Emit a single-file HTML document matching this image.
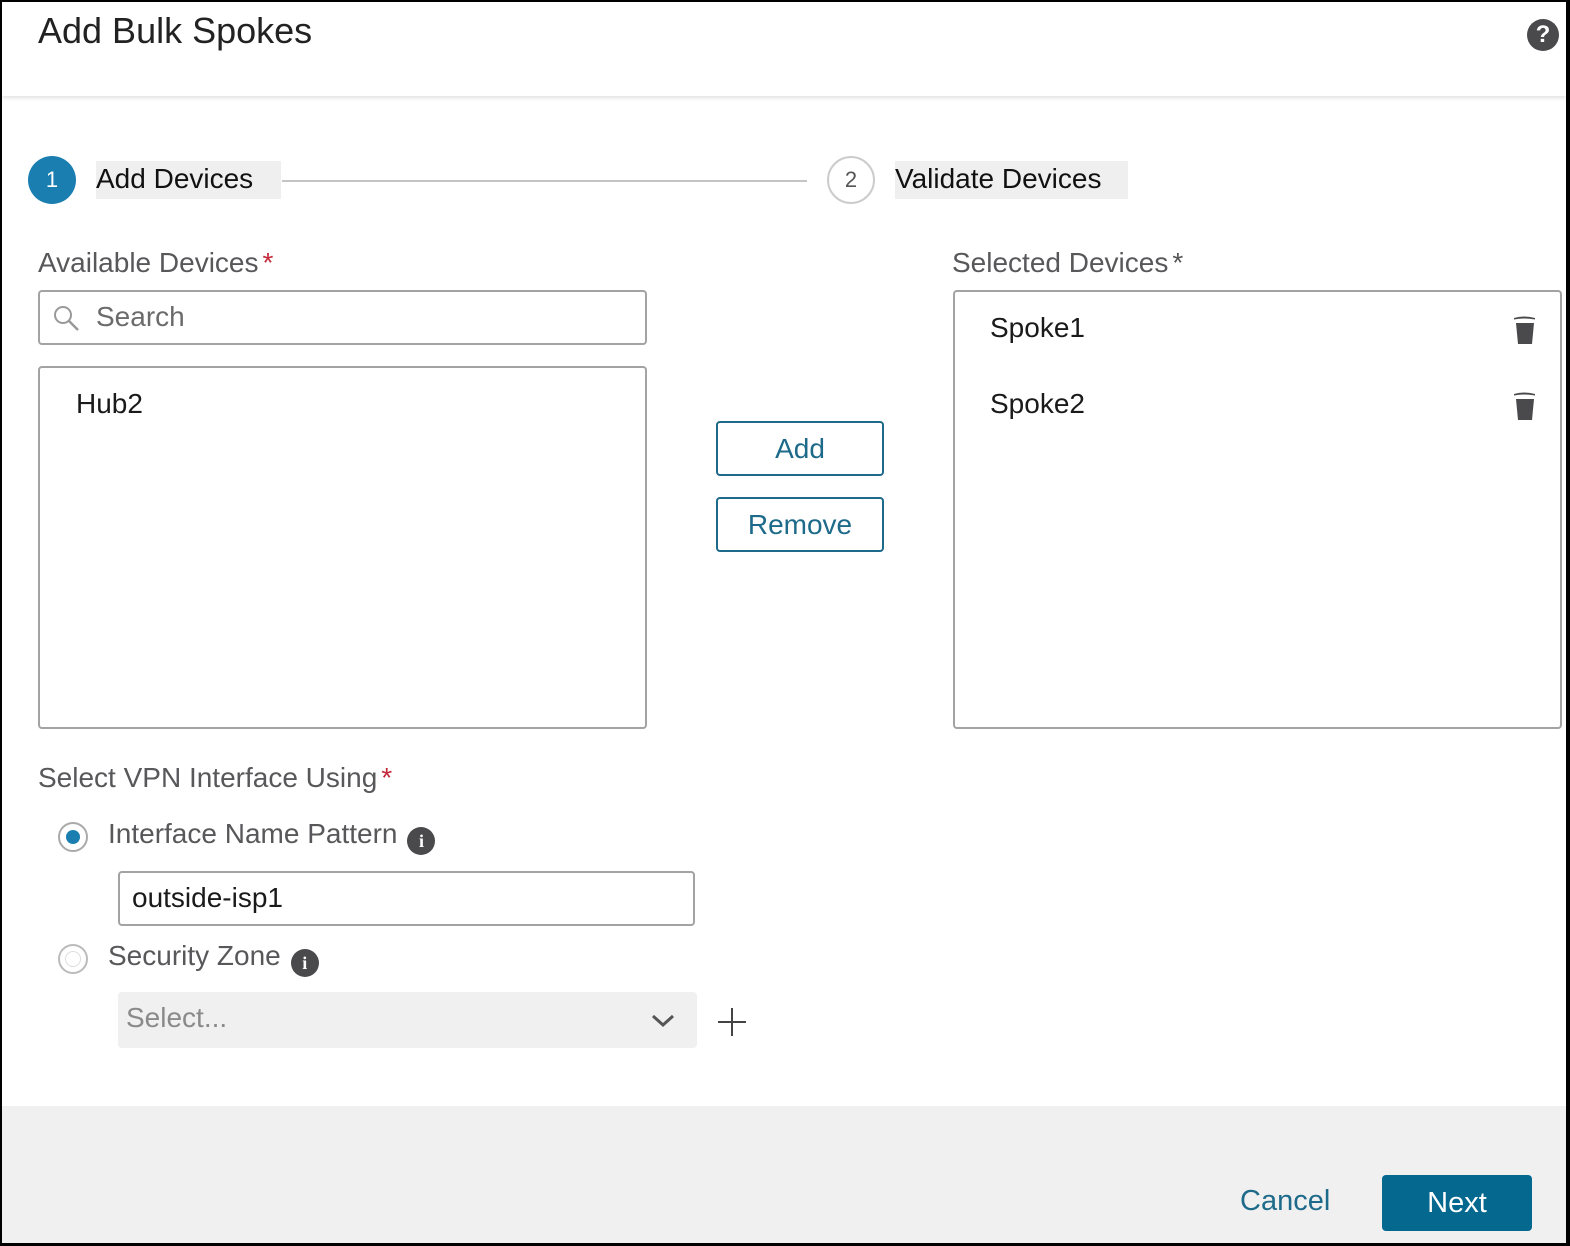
<!DOCTYPE html>
<html><head><meta charset="utf-8"><style>
*{box-sizing:border-box;margin:0;padding:0}
html,body{width:1570px;height:1246px;overflow:hidden;background:#000;font-family:"Liberation Sans",sans-serif}
#page{position:absolute;left:2px;top:2px;width:1564px;height:1241px;background:#fff;overflow:hidden}
.a{position:absolute;white-space:nowrap}
.hdr{position:absolute;left:0;top:0;width:1564px;height:94px;background:#fff;box-shadow:0 2px 4px rgba(0,0,0,0.12)}
.lbl{font-size:28px;color:#58585b}
.req{color:#c4283a;margin-left:4px}
.box{position:absolute;border:2px solid #a3a3a3;border-radius:4px;background:#fff}
.txt{font-size:28px;color:#1a1a1a}
.btn{position:absolute;border:2px solid #1d6a8a;border-radius:4px;color:#1d6a8a;font-size:28px;text-align:center;background:#fff}
.info{display:inline-block;vertical-align:-4px;margin-left:10px;width:28px;height:28px;border-radius:50%;background:#4a4a4d;color:#fff;font-size:18px;font-weight:bold;text-align:center;line-height:28px;font-family:"Liberation Serif",serif}
</style></head><body><div id="page">
<div class="hdr"></div>
<div class="a" style="left:36px;top:8px;font-size:36px;color:#222">Add Bulk Spokes</div>
<div class="a" style="left:1525px;top:17px;width:32px;height:32px;border-radius:50%;background:#4a4a4d;color:#fff;font-weight:bold;font-size:24px;text-align:center;line-height:32px">?</div>

<div class="a" style="left:26px;top:154px;width:48px;height:48px;border-radius:50%;background:#1a7fb0;color:#fff;font-size:22px;text-align:center;line-height:48px">1</div>
<div class="a" style="left:94px;top:159px;width:185px;height:38px;background:#efefef"></div>
<div class="a txt" style="left:94px;top:161px;color:#111">Add Devices</div>
<div class="a" style="left:280px;top:178px;width:525px;height:2px;background:#c4c4c4"></div>
<div class="a" style="left:825px;top:154px;width:48px;height:48px;border-radius:50%;border:2px solid #ccc;color:#555;font-size:22px;text-align:center;line-height:44px">2</div>
<div class="a" style="left:893px;top:159px;width:233px;height:38px;background:#efefef"></div>
<div class="a txt" style="left:893px;top:161px;color:#111">Validate Devices</div>

<div class="a lbl" style="left:36px;top:245px">Available Devices<span class="req">*</span></div>
<div class="box" style="left:36px;top:288px;width:609px;height:55px"></div>
<svg class="a" style="left:50px;top:302px" width="30" height="30" viewBox="0 0 30 30"><circle cx="11" cy="11" r="8" fill="none" stroke="#999" stroke-width="2"/><line x1="17" y1="17" x2="26" y2="26" stroke="#999" stroke-width="2.5"/></svg>
<div class="a" style="left:94px;top:299px;font-size:28px;color:#6b6b6b">Search</div>
<div class="box" style="left:36px;top:364px;width:609px;height:363px"></div>
<div class="a txt" style="left:74px;top:386px">Hub2</div>

<div class="btn" style="left:714px;top:419px;width:168px;height:55px;line-height:51px">Add</div>
<div class="btn" style="left:714px;top:495px;width:168px;height:55px;line-height:51px">Remove</div>

<div class="a lbl" style="left:950px;top:245px">Selected Devices<span style="color:#555;margin-left:4px">*</span></div>
<div class="box" style="left:951px;top:288px;width:609px;height:439px"></div>
<div class="a txt" style="left:988px;top:310px">Spoke1</div>
<div class="a txt" style="left:988px;top:386px">Spoke2</div>
<svg class="a" style="left:1511px;top:313px" width="24" height="30" viewBox="0 0 24 30"><path d="M1 3 Q11 0 22 3 L22 4.5 Q11 2.5 1 4.5Z" fill="#4a4a4d"/><path d="M3 8 L21 8 L19 29 L5 29Z" fill="#4a4a4d"/></svg>
<svg class="a" style="left:1511px;top:389px" width="24" height="30" viewBox="0 0 24 30"><path d="M1 3 Q11 0 22 3 L22 4.5 Q11 2.5 1 4.5Z" fill="#4a4a4d"/><path d="M3 8 L21 8 L19 29 L5 29Z" fill="#4a4a4d"/></svg>

<div class="a lbl" style="left:36px;top:760px">Select VPN Interface Using<span class="req">*</span></div>
<div class="a" style="left:56px;top:820px;width:30px;height:30px;border-radius:50%;border:2px solid #aaa"></div>
<div class="a" style="left:64px;top:828px;width:14px;height:14px;border-radius:50%;background:#1a7fb0"></div>
<div class="a lbl" style="left:106px;top:816px">Interface Name Pattern<span class="info">i</span></div>
<div class="box" style="left:116px;top:869px;width:577px;height:55px"></div>
<div class="a txt" style="left:130px;top:880px">outside-isp1</div>

<div class="a" style="left:56px;top:942px;width:30px;height:30px;border-radius:50%;border:2px solid #bbb"></div>
<div class="a" style="left:63px;top:949px;width:16px;height:16px;border-radius:50%;border:1px solid #ddd"></div>
<div class="a lbl" style="left:106px;top:938px">Security Zone<span class="info">i</span></div>
<div class="a" style="left:116px;top:990px;width:579px;height:56px;background:#f0f0f0;border-radius:4px"></div>
<div class="a" style="left:124px;top:1000px;font-size:28px;color:#8a8a8a">Select...</div>
<svg class="a" style="left:648px;top:1010px" width="26" height="18" viewBox="0 0 26 18"><path d="M3 4 L13 13 L23 4" fill="none" stroke="#555" stroke-width="3"/></svg>
<svg class="a" style="left:714px;top:1004px" width="32" height="32" viewBox="0 0 32 32"><path d="M16 2 V30 M2 16 H30" stroke="#444" stroke-width="2"/></svg>

<div class="a" style="left:0;top:1104px;width:1564px;height:140px;background:#f0f0f0"></div>
<div class="a" style="left:1238px;top:1183px;font-size:29px;color:#1d6a8a">Cancel</div>
<div class="a" style="left:1380px;top:1173px;width:150px;height:56px;background:#05688f;border-radius:4px;color:#fff;font-size:29px;text-align:center;line-height:56px">Next</div>
</div></body></html>
